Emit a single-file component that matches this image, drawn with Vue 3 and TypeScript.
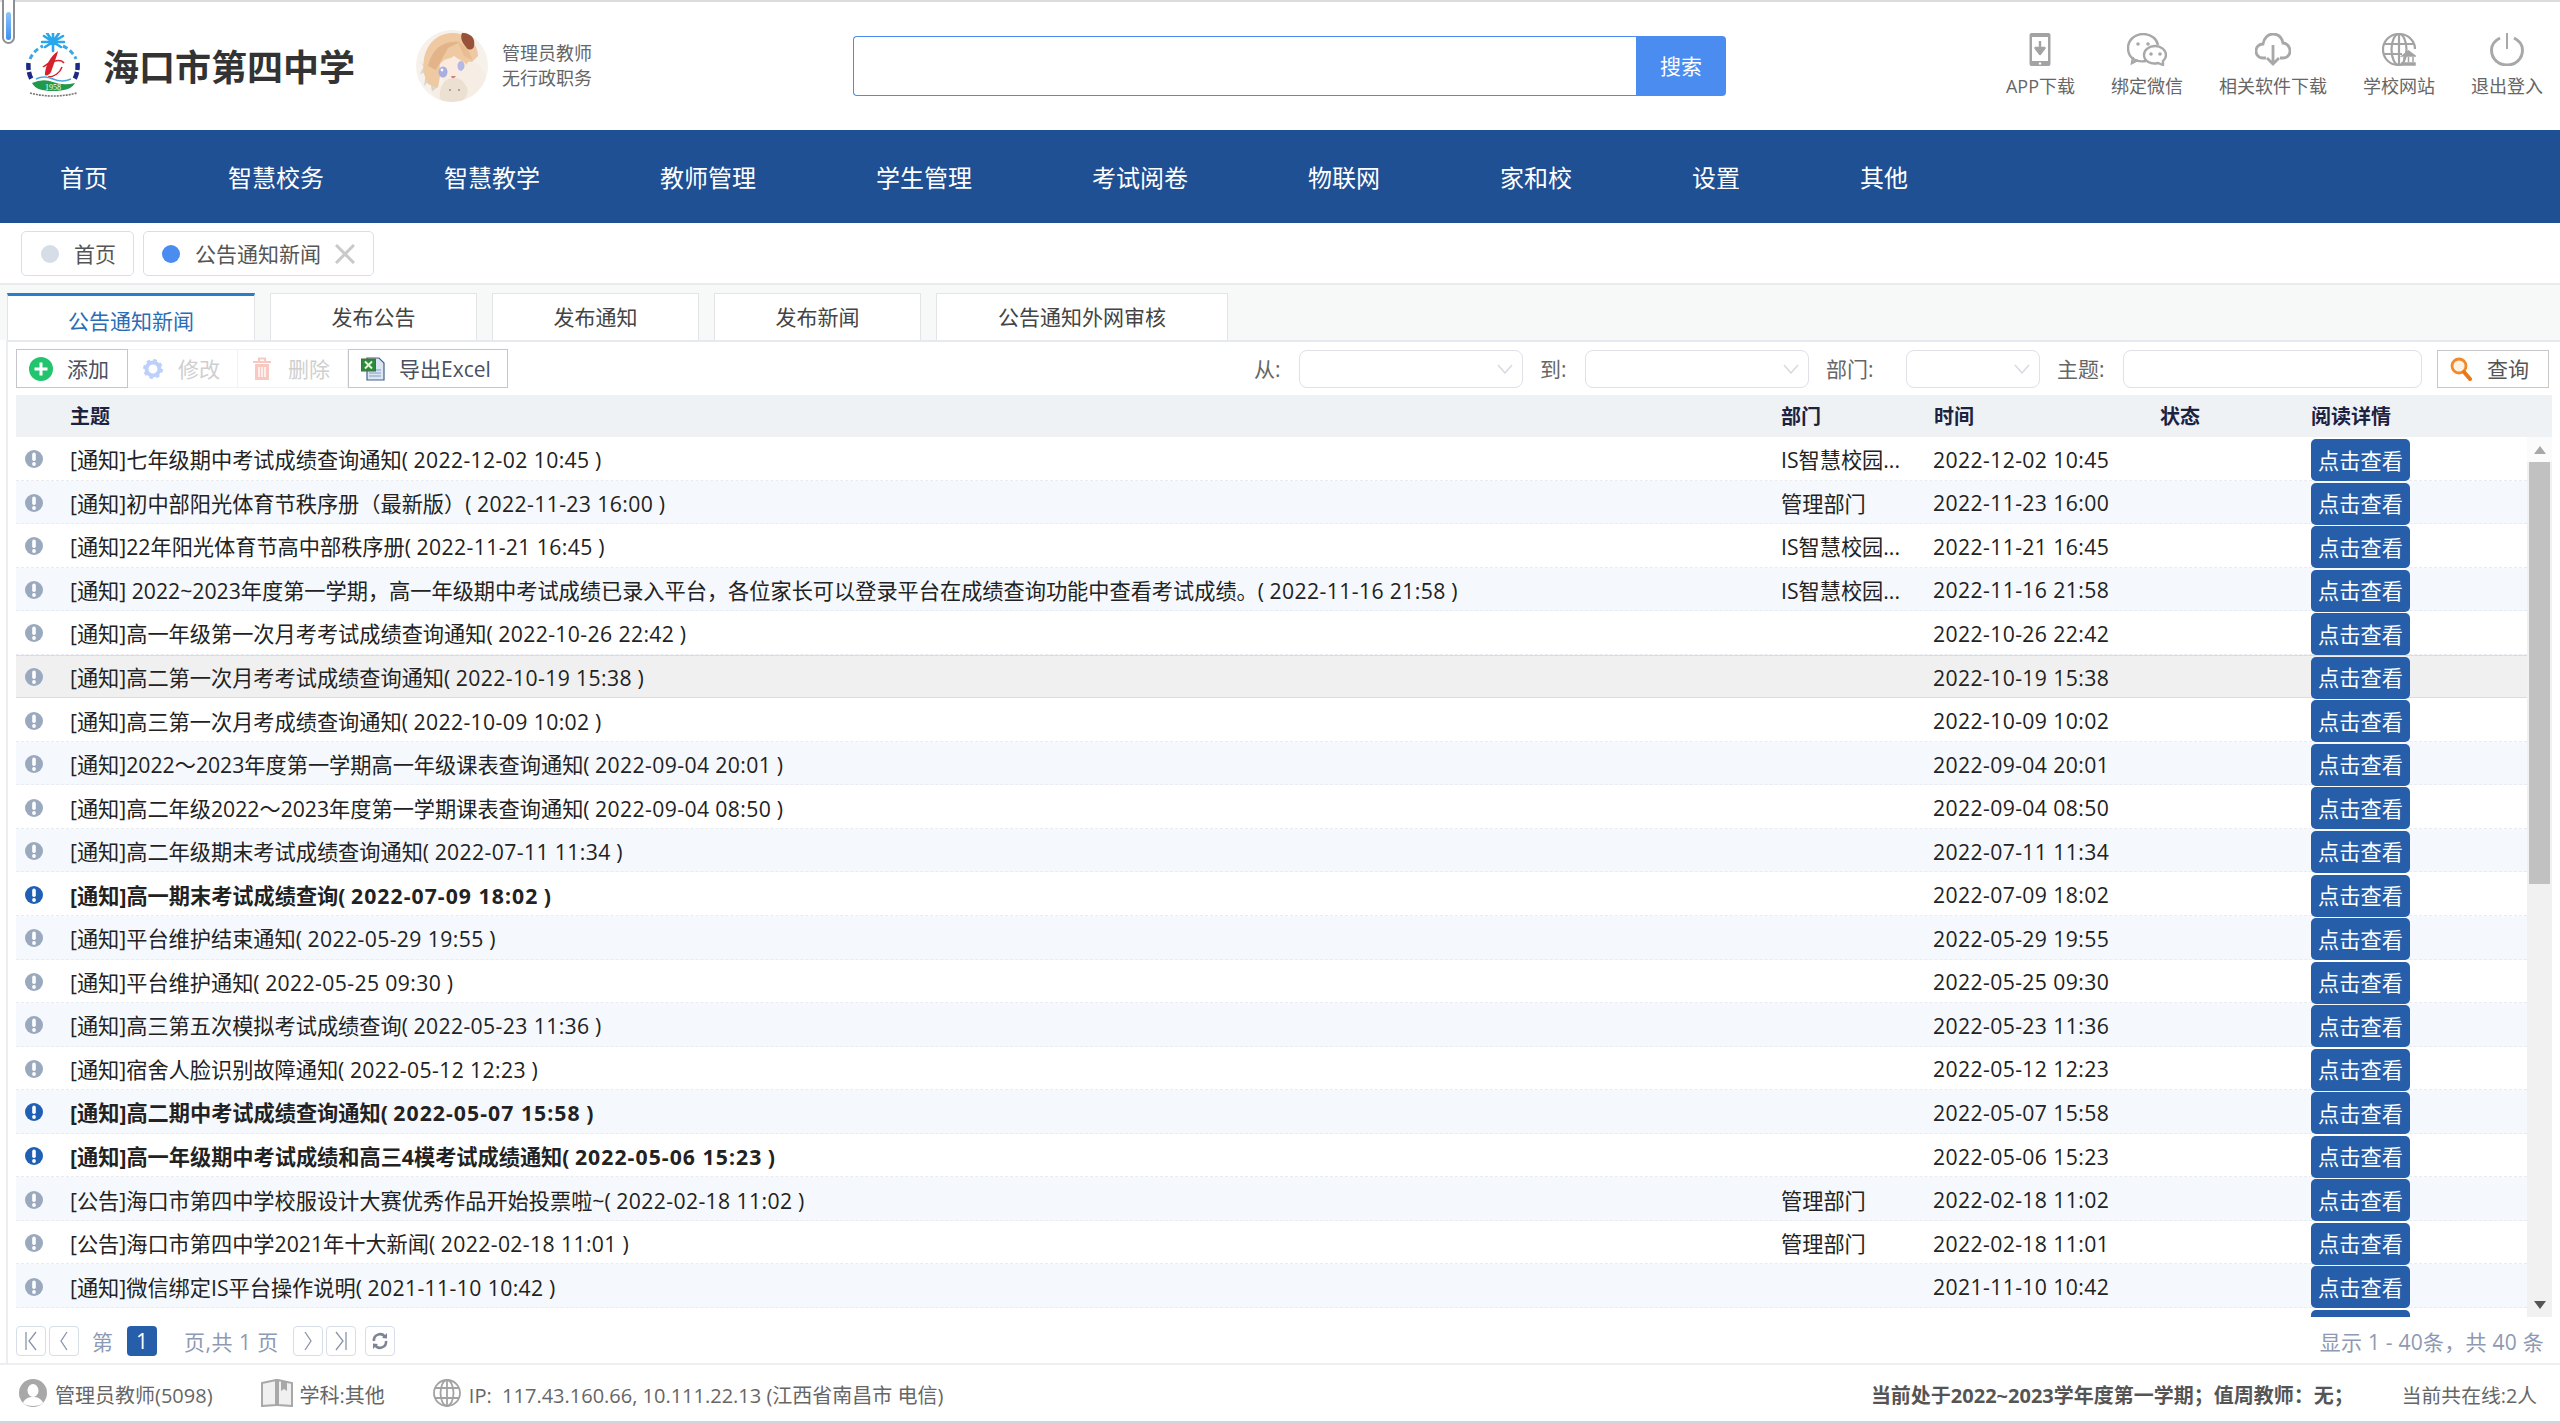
<script setup lang="ts">
interface Row { title: string; time: string; dept?: string; bold?: boolean; hover?: boolean }
const IS = 'IS智慧校园...'
const MG = '管理部门'
const rows: Row[] = [
  { title: '[通知]七年级期中考试成绩查询通知', time: '2022-12-02 10:45', dept: IS },
  { title: '[通知]初中部阳光体育节秩序册（最新版）', time: '2022-11-23 16:00', dept: MG },
  { title: '[通知]22年阳光体育节高中部秩序册', time: '2022-11-21 16:45', dept: IS },
  { title: '[通知] 2022~2023年度第一学期，高一年级期中考试成绩已录入平台，各位家长可以登录平台在成绩查询功能中查看考试成绩。', time: '2022-11-16 21:58', dept: IS },
  { title: '[通知]高一年级第一次月考考试成绩查询通知', time: '2022-10-26 22:42' },
  { title: '[通知]高二第一次月考考试成绩查询通知', time: '2022-10-19 15:38', hover: true },
  { title: '[通知]高三第一次月考成绩查询通知', time: '2022-10-09 10:02' },
  { title: '[通知]2022～2023年度第一学期高一年级课表查询通知', time: '2022-09-04 20:01' },
  { title: '[通知]高二年级2022～2023年度第一学期课表查询通知', time: '2022-09-04 08:50' },
  { title: '[通知]高二年级期末考试成绩查询通知', time: '2022-07-11 11:34' },
  { title: '[通知]高一期末考试成绩查询', time: '2022-07-09 18:02', bold: true },
  { title: '[通知]平台维护结束通知', time: '2022-05-29 19:55' },
  { title: '[通知]平台维护通知', time: '2022-05-25 09:30' },
  { title: '[通知]高三第五次模拟考试成绩查询', time: '2022-05-23 11:36' },
  { title: '[通知]宿舍人脸识别故障通知', time: '2022-05-12 12:23' },
  { title: '[通知]高二期中考试成绩查询通知', time: '2022-05-07 15:58', bold: true },
  { title: '[通知]高一年级期中考试成绩和高三4模考试成绩通知', time: '2022-05-06 15:23', bold: true },
  { title: '[公告]海口市第四中学校服设计大赛优秀作品开始投票啦~', time: '2022-02-18 11:02', dept: MG },
  { title: '[公告]海口市第四中学2021年十大新闻', time: '2022-02-18 11:01', dept: MG },
  { title: '[通知]微信绑定IS平台操作说明', time: '2021-11-10 10:42' },
  { title: '', time: '' },
]
const navItems = ['首页', '智慧校务', '智慧教学', '教师管理', '学生管理', '考试阅卷', '物联网', '家和校', '设置', '其他']
</script>

<template>
  <div class="page">
    <div class="clip"><div class="clip-fill"></div></div>

    <header class="header">
      <svg class="logo" viewBox="0 0 55 64">
        <path d="M27 18 L27 9 M27 9 L18 3 M27 9 L21 0 M27 9 L27 0 M27 9 L33 0 M27 9 L37 3 M27 9 L16 9 M27 9 L38 9 M27 9 L19 14 M27 9 L35 14" stroke="#2aa6ea" stroke-width="2.600" stroke-linecap="round" fill="none"/>
        <path d="M4 26 A25 25 0 0 1 17 13 M37 13 A25 25 0 0 1 50 26" stroke="#38a8e8" stroke-width="3" stroke-dasharray="5 3" fill="none"/>
        <path d="M2.500 30 C2 36 3 42 6 47 M51.500 30 C52 36 51 42 48 47" stroke="#1c2a86" stroke-width="4.500" stroke-dasharray="7 2" fill="none"/>
        <path d="M32 18 C24 24 20 32 19 40 C18 44 23 43 25 39 L31 22 Z" fill="#d8202c"/>
        <path d="M38 30 C34 24 22 30 17 34 M36 34 C34 40 28 44 22 44" stroke="#d8202c" stroke-width="1.500" fill="none"/>
        <path d="M10 46 Q18 42 27 46 T45 46" stroke="#47a8d8" stroke-width="1.500" fill="none"/>
        <path d="M6 50 Q17 45 27 49 T49 50 C46 56 38 58 27 58 C16 58 9 56 6 50 Z" fill="#1f9a4c"/>
        <text x="27" y="56.500" text-anchor="middle" font-size="8" fill="#fff" font-family="Liberation Serif, serif">1958</text>
        <path d="M4 60 Q27 66 51 60" stroke="#777" stroke-width="1.600" stroke-dasharray="2 1" fill="none"/>
      </svg>
      <h1 class="school">海口市第四中学</h1>
      <svg class="avatar" viewBox="0 0 72 72">
        <defs><clipPath id="avclip"><circle cx="36" cy="36" r="36"/></clipPath></defs>
        <g clip-path="url(#avclip)">
          <rect width="72" height="72" fill="#f6f1ea"/>
          <path d="M3 30 L8 36 L4 44 L10 42 L8 56 L14 50 L16 62 L22 58 Z" fill="#d9d5cd"/>
          <path d="M8 44 C4 18 20 2 38 3 C52 4 62 14 62 26 L52 36 L38 26 L26 34 L22 58 L12 54 Z" fill="#efc9a2"/>
          <path d="M12 36 C16 18 28 10 44 12 L32 18 L20 40 Z" fill="#e3b489"/>
          <path d="M42 12 C50 16 54 22 56 30 L48 26 Z" fill="#e9bd92"/>
          <path d="M24 34 C30 26 42 26 50 34 C50 46 44 54 36 54 C28 54 22 46 24 34 Z" fill="#fbeadf"/>
          <ellipse cx="27" cy="42" rx="4.500" ry="5.500" fill="#a8aee0"/>
          <circle cx="26" cy="40" r="1.400" fill="#fff"/>
          <ellipse cx="45" cy="36" rx="3.500" ry="5" fill="#b4b8e6"/>
          <path d="M46 3 C54 2 60 8 58 16 C58 20 52 21 50 17 C46 12 44 8 46 3 Z" fill="#985239"/>
          <path d="M35 46 L40 46 L37 50 Z" fill="#d77d78"/>
          <path d="M52 32 C62 30 70 40 72 56 L72 72 L20 72 L16 62 C22 54 42 52 52 32 Z" fill="#f6eee4"/>
          <path d="M28 52 C34 46 46 46 50 56 C54 60 50 72 42 72 L26 72 C22 66 24 58 28 52 Z" fill="#ece0d2"/>
          <circle cx="34" cy="60" r="1" fill="#a58d78"/><circle cx="43" cy="60" r="1" fill="#a58d78"/>
        </g>
      </svg>
      <div class="who"><div>管理员教师</div><div>无行政职务</div></div>
      <div class="search"><div class="search-input"></div><div class="search-btn"><span>搜索</span></div></div>
      <div class="actions">
        <div class="action">
          <svg viewBox="0 0 22 33" width="22" height="33"><rect x="0.500" width="21" height="33" rx="2" fill="#a3a3a3"/><rect x="3" y="4" width="16" height="24" fill="#fff"/><path d="M11 8v9M6.500 15h9L11 21z" stroke="#a3a3a3" stroke-width="2.400" fill="#a3a3a3" stroke-linejoin="round"/><circle cx="11" cy="30.500" r="1.200" fill="#fff"/></svg>
          <span>APP下载</span>
        </div>
        <div class="action">
          <svg viewBox="0 0 40 33" width="40" height="33" fill="none" stroke="#a8a8a8" stroke-width="2.400"><path d="M19 28 C8 30 1 24 1 15 C1 7 8 1 16 1 C24 1 30 6 31 12"/><path d="M6 24 L5 30 L11 27"/><path d="M28 13 C34 13 39 17 39 22 C39 25 37 27 36 28 L36 32 L31 30 C24 32 17 28 17 22 C17 17 22 13 28 13 Z"/><circle cx="11" cy="11" r="1.800" fill="#a8a8a8" stroke="none"/><circle cx="21" cy="11" r="1.800" fill="#a8a8a8" stroke="none"/><circle cx="24" cy="21" r="1.800" fill="#a8a8a8" stroke="none"/><circle cx="33" cy="21" r="1.800" fill="#a8a8a8" stroke="none"/></svg>
          <span>绑定微信</span>
        </div>
        <div class="action">
          <svg viewBox="0 0 36 33" width="36" height="33" fill="none" stroke="#a8a8a8" stroke-width="2.800"><path d="M11 25 H8 C3 25 1 21 1 18 C1 14 4 11 8 11 C9 5 13 1 18 1 C24 1 27 5 28 10 C32 10 35 14 35 18 C35 22 32 25 28 25 H25"/><path d="M18 12 V31 M12 25 L18 31 L24 25"/></svg>
          <span>相关软件下载</span>
        </div>
        <div class="action">
          <svg viewBox="0 0 34 33" width="34" height="33" fill="none" stroke="#a3a3a3" stroke-width="2.200"><path d="M20 31.500 C7 34 1 24 1 16.500 C1 8 8 1 17 1 C26 1 33 8 33 16"/><ellipse cx="17" cy="16.500" rx="7.500" ry="15.500"/><path d="M17 1 V32 M2 11 H32 M1.500 21 H20"/><path d="M20 32 H33 V30 H20 Z M22 29 V24 M26.500 29 V24 M31 29 V24 M20 23 L26.500 18 L33 23 Z" fill="#a3a3a3" stroke-width="1.500"/></svg>
          <span>学校网站</span>
        </div>
        <div class="action">
          <svg viewBox="0 0 34 33" width="34" height="33" fill="none" stroke="#a8a8a8" stroke-width="3"><path d="M10 5 C4 8 1.500 13 1.500 17 C1.500 26 8.500 32 17 32 C25.500 32 32.500 26 32.500 17 C32.500 13 30 8 24 5"/><path d="M17 0 V16" stroke-width="2"/></svg>
          <span>退出登入</span>
        </div>
      </div>
    </header>

    <nav class="nav"><a v-for="n in navItems" :key="n" class="nav-item">{{ n }}</a></nav>

    <div class="tagbar">
      <div class="tag tag-home"><i class="dot"></i><span>首页</span></div>
      <div class="tag tag-cur">
        <i class="dot dot-on"></i><span>公告通知新闻</span>
        <svg class="tag-x" viewBox="0 0 20 20" width="20" height="20"><path d="M1 1 L19 19 M19 1 L1 19" stroke="#c9c9c9" stroke-width="3"/></svg>
      </div>
    </div>

    <div class="tabstrip">
      <div class="tab tab-on">公告通知新闻</div>
      <div class="tab t2">发布公告</div>
      <div class="tab t2">发布通知</div>
      <div class="tab t2">发布新闻</div>
      <div class="tab t5">公告通知外网审核</div>
    </div>

    <main class="panel">
      <div class="toolbar">
        <div class="tbtn tbtn-add">
          <svg viewBox="0 0 24 24" width="24" height="24"><circle cx="12" cy="12" r="12" fill="#22c56e"/><path d="M12 5.500 V18.500 M5.500 12 H18.500" stroke="#fff" stroke-width="3"/></svg>
          <span>添加</span>
        </div>
        <div class="tbtn tbtn-off">
          <svg viewBox="0 0 20 20" width="20" height="20"><circle cx="10" cy="10" r="6.500" fill="none" stroke="#bdd0fb" stroke-width="4"/><circle cx="10" cy="10" r="8.500" fill="none" stroke="#bdd0fb" stroke-width="3" stroke-dasharray="3.500 3.170"/></svg>
          <span>修改</span>
        </div>
        <div class="tbtn tbtn-off tbtn-del">
          <svg viewBox="0 0 18 24" width="18" height="24"><path d="M0 5 H18 M6 5 V1.500 H12 V5" stroke="#f8c9c3" stroke-width="2.200" fill="none"/><path d="M2 7 H16 V23 H2 Z" fill="#f8c9c3"/><path d="M6 10 V20 M9 10 V20 M12 10 V20" stroke="#fff" stroke-width="1.400"/></svg>
          <span>删除</span>
        </div>
        <div class="tbtn tbtn-xls">
          <svg viewBox="0 0 24 24" width="24" height="24"><path d="M6 1 H18 L23 6 V23 H6 Z" fill="#dce6f2" stroke="#42618c" stroke-width="1.200"/><path d="M8 16 H20 M8 19 H20 M14 13 H20" stroke="#7e9dc4" stroke-width="1.200"/><rect x="0.500" y="2" width="14" height="12" fill="#2a8b3c" stroke="#4f6b3a"/><path d="M4 4.500 L11 11.500 M11 4.500 L4 11.500" stroke="#e8f4d8" stroke-width="2"/></svg>
          <span>导出Excel</span>
        </div>
        <div class="filters">
          <label class="l-s">从:</label>
          <div class="sel sel-w">
            <svg viewBox="0 0 16 10" width="16" height="10"><path d="M1 1 L8 9 L15 1" stroke="#d9d8e4" stroke-width="1.500" fill="none"/></svg>
          </div>
          <label class="l-s">到:</label>
          <div class="sel sel-w">
            <svg viewBox="0 0 16 10" width="16" height="10"><path d="M1 1 L8 9 L15 1" stroke="#d9d8e4" stroke-width="1.500" fill="none"/></svg>
          </div>
          <label class="l-d">部门:</label>
          <div class="sel sel-s">
            <svg viewBox="0 0 16 10" width="16" height="10"><path d="M1 1 L8 9 L15 1" stroke="#d9d8e4" stroke-width="1.500" fill="none"/></svg>
          </div>
          <label class="l-t">主题:</label>
          <div class="sel sel-l"></div>
          <div class="qbtn">
            <svg viewBox="0 0 22 24" width="22" height="24"><circle cx="9" cy="9" r="7" fill="#fdf2e6" stroke="#f08a2c" stroke-width="2.800"/><path d="M14 15 L20 22" stroke="#e8781c" stroke-width="4" stroke-linecap="round"/></svg>
            <span>查询</span>
          </div>
        </div>
      </div>

      <div class="thead">
        <span></span><b>主题</b><b>部门</b><b>时间</b><b>状态</b><b>阅读详情</b>
      </div>

      <div class="tbody">
        <div class="rows">
          <div v-for="(r, i) in rows" :key="i" class="row" :class="{ alt: i % 2 === 1, hov: r.hover, bold: r.bold }">
            <svg v-if="r.title" class="flag" viewBox="0 0 18 18" width="18" height="18">
              <circle cx="9" cy="9" r="9" :fill="r.bold ? '#1f5fb4' : '#9aa9bd'"/>
              <rect x="7.200" y="2.600" width="3.600" height="8.400" rx="1.800" fill="#fff"/>
              <circle cx="9" cy="14" r="1.900" fill="#fff"/>
            </svg>
            <span v-else></span>
            <span class="ttl"><template v-if="r.title">{{ r.title }}( <span class="dt">{{ r.time }}</span> )</template></span>
            <span class="dept">{{ r.dept }}</span>
            <span class="time">{{ r.time }}</span>
            <span></span>
            <a class="view"><template v-if="r.title">点击查看</template></a>
          </div>
        </div>
        <div class="sbar">
          <div class="sb-up"><svg viewBox="0 0 12 8" width="12" height="8"><path d="M6 0 L12 8 H0 Z" fill="#a8a8a8"/></svg></div>
          <div class="sb-thumb"></div>
          <div class="sb-rest"></div>
          <div class="sb-down"><svg viewBox="0 0 12 8" width="12" height="8"><path d="M0 0 H12 L6 8 Z" fill="#555"/></svg></div>
        </div>
      </div>

      <div class="pager">
        <div class="pbtn"><svg viewBox="0 0 16 22" width="16" height="22"><path d="M3 2 V20 M13 2 L6 11 L13 20" stroke="#8a94a8" stroke-width="1.300" fill="none"/></svg></div>
        <div class="pbtn"><svg viewBox="0 0 16 22" width="16" height="22"><path d="M11 2 L5 11 L11 20" stroke="#8a94a8" stroke-width="1.300" fill="none"/></svg></div>
        <span class="ptxt p-di">第</span>
        <span class="pnum">1</span>
        <span class="ptxt p-of">页,共 1 页</span>
        <div class="pbtn"><svg viewBox="0 0 16 22" width="16" height="22"><path d="M5 2 L11 11 L5 20" stroke="#8a94a8" stroke-width="1.300" fill="none"/></svg></div>
        <div class="pbtn"><svg viewBox="0 0 16 22" width="16" height="22"><path d="M3 2 L10 11 L3 20 M13 2 V20" stroke="#8a94a8" stroke-width="1.300" fill="none"/></svg></div>
        <div class="pbtn p-ref"><svg viewBox="0 0 18 22" width="18" height="22"><path d="M3 11 A6 6 0 0 1 14 7 M15 11 A6 6 0 0 1 4 15" stroke="#7b8494" stroke-width="2.600" fill="none"/><path d="M11 8 L16 8.500 L16 3 Z M7 14 L2 13.500 L2 19 Z" fill="#7b8494"/></svg></div>
        <span class="ptotal">显示 1 - 40条，共 40 条</span>
      </div>
    </main>

    <footer class="footer">
      <svg class="fi-user" viewBox="0 0 28 28" width="28" height="28"><circle cx="14" cy="14" r="14" fill="#a8a8a8"/><ellipse cx="14" cy="11.500" rx="5.500" ry="6.500" fill="#fff"/><path d="M4 24 C6 19 10 18 14 18 C18 18 22 19 24 24 C20 28 8 28 4 24 Z" fill="#fff"/></svg>
      <span class="f-who">管理员教师(5098)</span>
      <svg class="fi-book" viewBox="0 0 32 28" width="32" height="28"><path d="M1 4 L15 1 V26 L1 27 Z M17 1 L31 4 V27 L17 26 Z" fill="#f0f0f0" stroke="#a8a8a8" stroke-width="2"/><path d="M20 1.500 V12 L23 10 L26 12 V2.500" fill="#a8a8a8"/></svg>
      <span class="f-sub">学科:其他</span>
      <svg class="fi-globe" viewBox="0 0 28 28" width="28" height="28" fill="none" stroke="#a3a3a3" stroke-width="1.800"><circle cx="14" cy="14" r="13"/><ellipse cx="14" cy="14" rx="6.500" ry="13"/><path d="M14 1 V27 M2 9 H26 M2 19 H26"/></svg>
      <span class="f-ip">IP:&nbsp; 117.43.160.66, 10.111.22.13 (江西省南昌市 电信)</span>
      <b class="f-term">当前处于2022~2023学年度第一学期；值周教师：无；</b>
      <span class="f-online">当前共在线:2人</span>
    </footer>
  </div>
</template>

<style>
html, body { margin: 0; padding: 0; background: #fff; }
</style>

<style scoped>
* { box-sizing: border-box; }
.page {
  position: relative;
  width: 2560px;
  height: 1423px;
  overflow: hidden;
  display: flex;
  flex-direction: column;
  font-family: "Open Sans", "Noto Sans CJK SC", sans-serif;
  color: #222;
  background: #fff;
}
.clip {
  position: absolute; left: 2px; top: 0; width: 13px; height: 44px;
  border: 2px solid #8c8f94; border-top: 0; border-radius: 0 0 7px 7px; background: #fff;
  display: flex; justify-content: center; align-items: flex-end; padding-bottom: 2px;
}
.clip-fill { width: 5px; height: 28px; border-radius: 3px; background: linear-gradient(#8cc4fb, #3d8ff0); }

.header {
  height: 130px; flex: none; display: flex; align-items: flex-start;
  border-top: 2px solid #dcdcdc;
}
.logo { width: 55px; height: 64px; margin: 31px 0 0 26px; flex: none; }
.school { margin: 41px 0 0 22px; width: 252px; font-size: 36px; line-height: 50px; font-weight: 700; color: #333; white-space: nowrap; }
.avatar { width: 72px; height: 72px; margin: 28px 0 0 61px; flex: none; }
.who { margin: 39px 0 0 14px; width: 92px; font-size: 18px; line-height: 25px; color: #666; white-space: nowrap; }
.search { margin: 34px 0 0 259px; width: 873px; height: 60px; display: flex; }
.search-input { flex: 1; border: 1px solid #4a8cf0; border-right: 0; border-radius: 4px 0 0 4px; }
.search-btn { width: 90px; background: #4a8cf0; color: #fff; font-size: 21px; display: flex; align-items: center; justify-content: center; border-radius: 0 4px 4px 0; padding-bottom: 2px; }
.actions { margin-left: auto; padding: 31px 17px 0 0; display: flex; gap: 36px; }
.action { display: flex; flex-direction: column; align-items: center; font-size: 18px; line-height: 24px; color: #666; gap: 8px; white-space: nowrap; }

.nav { height: 93px; flex: none; background: #1f5094; display: flex; align-items: center; padding-left: 60px; gap: 120px; }
.nav-item { color: #fff; font-size: 24px; white-space: nowrap; }

.tagbar { height: 62px; flex: none; display: flex; align-items: flex-start; padding: 8px 0 0 21px; gap: 9px; border-bottom: 2px solid #e9ebee; }
.tag { height: 45px; display: flex; align-items: center; border: 1px solid #d8dfe8; border-radius: 5px; font-size: 21px; color: #555; background: #fff; white-space: nowrap; }
.tag span { padding-bottom: 2px; }
.tag-home { width: 113px; padding-left: 19px; gap: 15px; }
.tag-cur { width: 231px; padding-left: 18px; gap: 15px; }
.tag-x { margin-left: -1px; }
.dot { width: 18px; height: 18px; border-radius: 50%; background: #d5dde6; flex: none; }
.dot-on { background: #4a8cf0; }

.tabstrip { height: 55px; flex: none; background: #f7f8f8; display: flex; align-items: flex-start; padding: 8px 0 0 7px; gap: 15px; }
.tab { height: 47px; display: flex; align-items: center; justify-content: center; background: #fff; border: 1px solid #e2e4e8; border-bottom: 0; font-size: 21px; color: #444; white-space: nowrap; padding-bottom: 2px; }
.tab-on { width: 248px; border-top: 3px solid #2d7cc9; color: #2a6db5; padding-top: 3px; padding-bottom: 0; }
.t2 { width: 207px; }
.t5 { width: 292px; }

.panel { flex: 1; min-height: 0; margin-left: 6px; border-left: 2px solid #ebedf0; border-top: 2px solid #e6e9ee; padding: 7px 8px 0 8px; display: flex; flex-direction: column; }

.toolbar { height: 39px; flex: none; display: flex; align-items: stretch; }
.tbtn { display: flex; align-items: center; font-size: 21px; white-space: nowrap; }
.tbtn span { padding-bottom: 2px; }
.tbtn-add { width: 112px; border: 1px solid #c4c6cc; padding-left: 12px; gap: 14px; color: #4a5060; }
.tbtn-off { width: 110px; padding-left: 15px; gap: 15px; color: #cfcfcf; border: 1px solid #f1f2f4; border-left: 0; }
.tbtn-del { gap: 17px; }
.tbtn-xls { width: 160px; border: 1px solid #c4c6cc; padding-left: 12px; gap: 14px; color: #4a5060; }
.filters { margin-left: auto; margin-right: 3px; display: flex; align-items: center; font-size: 21px; color: #666; }
.filters label { white-space: nowrap; padding-bottom: 2px; flex: none; }
.l-s { width: 45px; }
.l-d { width: 80px; }
.l-t { width: 66px; }
.sel { height: 38px; border: 1px solid #e0e0e6; border-radius: 8px; display: flex; align-items: center; justify-content: flex-end; padding-right: 9px; background: #fff; flex: none; }
.sel-w { width: 224px; margin-right: 17px; }
.sel-s { width: 134px; margin-right: 17px; }
.sel-l { width: 299px; margin-right: 15px; }
.qbtn { width: 112px; height: 38px; border: 1px solid #c8c8c8; display: flex; align-items: center; padding-left: 12px; gap: 15px; color: #555; flex: none; }
.qbtn span { padding-bottom: 2px; }

.thead { height: 42px; flex: none; margin-top: 7px; padding-bottom: 2px; background: #eff2f5; display: grid; grid-template-columns: 54px 1711px 153px 226px 151px 1fr; align-items: center; font-size: 20px; color: #1c2340; }
.thead b { font-weight: 700; white-space: nowrap; }

.tbody { height: 880px; flex: none; display: flex; overflow: hidden; }
.rows { width: 2511px; flex: none; overflow: hidden; }
.row { height: 43.55px; padding-top: 1px; display: grid; grid-template-columns: 54px 1711px 153px 226px 151px 1fr; align-items: center; font-size: 21.2px; color: #222; border-bottom: 1px dashed #e8ecf0; white-space: nowrap; background: #fff; }
.alt { background: #f5f8fc; }
.hov { background: #f0f0f0; border-top: 1px solid #dcdcdc; border-bottom: 1px solid #dcdcdc; padding-top: 0; }
.bold .ttl { font-weight: 700; }
.dt { letter-spacing: 0.38px; }
.bold .dt { letter-spacing: 1.05px; }
.time { letter-spacing: 0.38px; margin: 1px 0 0 -1px; }
.flag { margin-left: 9px; margin-top: 1px; }
.view { width: 99px; height: 42px; align-self: end; margin-bottom: -1.5px; background: #265eaa; color: #fff; border-radius: 5px; display: flex; align-items: center; justify-content: center; font-size: 21.2px; padding-bottom: 2px; }

.sbar { width: 25px; flex: none; background: #f1f1f1; display: flex; flex-direction: column; align-items: center; }
.sb-up { height: 25px; width: 25px; background: #fbfbfb; display: flex; align-items: center; justify-content: center; }
.sb-thumb { height: 422px; width: 21px; background: #c1c1c1; flex: none; }
.sb-rest { flex: 1; }
.sb-down { height: 25px; display: flex; align-items: center; justify-content: center; }

.pager { height: 38px; flex: none; margin-top: 5px; display: flex; align-items: center; font-size: 21px; color: #8e99b3; }
.pbtn { width: 30px; height: 30px; margin-right: 3px; border: 1px solid #d8dee8; border-radius: 4px; display: flex; align-items: center; justify-content: center; flex: none; }
.ptxt { white-space: nowrap; }
.p-di { margin: 0 14px 0 10px; }
.pnum { width: 30px; height: 30px; background: #265eaa; color: #fff; border-radius: 4px; display: flex; align-items: center; justify-content: center; font-size: 21px; flex: none; }
.p-of { margin: 0 14px 0 27px; width: 95px; letter-spacing: 0.5px; }
.p-ref { margin-left: 6px; }
.ptotal { margin-left: auto; margin-right: 8px; white-space: nowrap; letter-spacing: 0.25px; }

.footer { height: 60px; flex: none; display: flex; align-items: center; font-size: 20px; color: #666; border-top: 2px solid #eceef1; border-bottom: 2px solid #ced6de; white-space: nowrap; }
.footer span, .footer b { padding-top: 2px; }
.fi-user { margin-left: 19px; flex: none; }
.f-who { margin-left: 8px; }
.fi-book { margin-left: 48px; flex: none; }
.f-sub { margin-left: 7px; }
.fi-globe { margin-left: 48px; flex: none; }
.f-ip { margin-left: 8px; }
.f-term { margin-left: auto; font-weight: 700; color: #555; }
.f-online { margin-left: 48px; margin-right: 23px; font-size: 19.8px; }
</style>
